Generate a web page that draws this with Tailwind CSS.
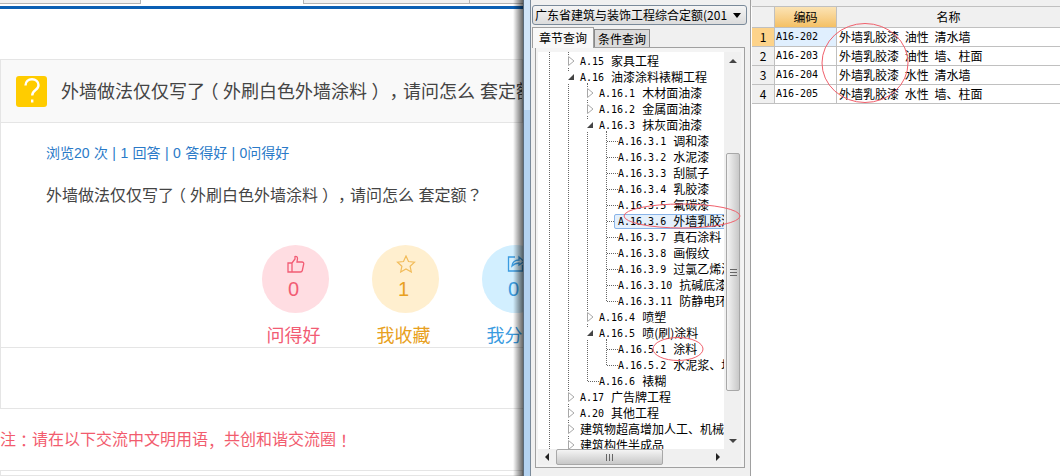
<!DOCTYPE html>
<html><head><meta charset="utf-8"><script src="https://cdn.jsdelivr.net/npm/@tailwindcss/browser@4"></script></head>
<body class="m-0">
<div class="relative w-[1060px] h-[476px] overflow-hidden flex bg-white font-['Noto_Sans_CJK_SC','Liberation_Sans',sans-serif]">
  <!-- web page -->
  <div class="w-[523px] shrink-0 h-full flex flex-col font-['Liberation_Sans','Noto_Sans_CJK_SC',sans-serif]">
    <div class="h-[4px] flex shrink-0">
      <div class="w-[141px] border-r border-b border-[#b4b4b4] bg-[#f0f0f0]"></div>
      <div class="w-[162px]"></div>
      <div class="w-[167px] border-x border-b border-[#b4b4b4] bg-[#f0f0f0]"></div>
      <div class="flex-1 border-b border-[#b4b4b4] bg-[#f0f0f0]"></div>
    </div>
    <div class="h-[2px] shrink-0"></div>
    <div class="h-[3px] bg-[#0a5fb4] shrink-0"></div>
    <div class="h-[50px] shrink-0"></div>
    <div class="h-[64px] shrink-0 flex items-center gap-[14px] pl-[15px] border border-[#e5e5e5] bg-[#f9f9f9] overflow-hidden whitespace-nowrap">
      <div class="w-[31px] h-[31px] rounded-[3px] bg-[#ffcc00] shrink-0 flex items-center justify-center">
        <svg class="w-[16px] h-[26px]" viewBox="0 0 16 26" fill="none" stroke="#fff" stroke-width="2.400"><path d="M1.500 7.500C1.500 3.500 4.300 1.300 8 1.300s6.500 2.300 6.500 5.700c0 2.300-1.200 3.700-3 5-1.900 1.400-3.300 2.700-3.300 5.500"/><path d="M8.200 21.500v3"/></svg>
      </div>
      <div class="text-[18px] text-[#444]">外墙做法仅仅写了<span class="inline-block w-[1em] text-center [font-feature-settings:'halt']">（</span>外刷白色外墙涂料<span class="inline-block w-[1em] text-center [font-feature-settings:'halt']">）</span><span class="inline-block w-[1em] text-center [font-feature-settings:'halt']">，</span>请问怎么 套定额<span class="font-['Noto_Sans_CJK_KR']">？</span></div>
    </div>
    <div class="h-[225px] shrink-0 border-l border-b border-[#e5e5e5] flex flex-col overflow-hidden">
      <div class="pl-[45px] pt-[19px] text-[14px] leading-[22px] text-[#2a7ac8] whitespace-nowrap [word-spacing:0.5px]">浏览20 次 | 1 回答 | 0 答得好 | 0问得好</div>
      <div class="pl-[45px] pt-[18px] text-[16px] leading-[24px] text-[#444] whitespace-nowrap">外墙做法仅仅写了<span class="inline-block w-[1em] text-center [font-feature-settings:'halt']">（</span>外刷白色外墙涂料<span class="inline-block w-[1em] text-center [font-feature-settings:'halt']">）</span><span class="inline-block w-[1em] text-center [font-feature-settings:'halt']">，</span>请问怎么 套定额<span class="font-['Noto_Sans_CJK_KR']">？</span></div>
      <div class="flex gap-[43px] pl-[261px] pt-[37px] w-[600px]">
        <div class="w-[67px] shrink-0 flex flex-col items-center">
          <div class="w-[67px] h-[68px] rounded-full bg-[#ffdde2] text-[#f25c74] flex flex-col items-center pt-[10px]">
            <svg class="w-[18px] h-[18px]" viewBox="0 0 18 18" fill="none" stroke="#f25c74" stroke-width="1.300"><path d="M1 8h4v9H1zM5 8l3-4V1.500c1.500-.5 2.500.5 2.500 2L10 7h5c1.300 0 2 1 1.700 2l-1.400 6.500c-.2 1-1 1.500-2 1.500H5"/></svg>
            <div class="text-[20px] leading-[26px] mt-[3px] mr-[4px]">0</div>
          </div>
          <div class="text-[18px] leading-[24px] mt-[11px] mr-[4px] text-[#f25c74] whitespace-nowrap">问得好</div>
        </div>
        <div class="w-[67px] shrink-0 flex flex-col items-center">
          <div class="w-[67px] h-[68px] rounded-full bg-[#ffefcf] text-[#e8a020] flex flex-col items-center pt-[10px]">
            <svg class="w-[20px] h-[18px]" viewBox="0 0 20 18" fill="none" stroke="#f2bc5a" stroke-width="1.200"><path d="M10 1l2.500 5.500 6 .7-4.400 4 1.200 5.800L10 14l-5.300 3 1.200-5.800-4.400-4 6-.7z"/></svg>
            <div class="text-[20px] leading-[26px] mt-[3px] mr-[4px]">1</div>
          </div>
          <div class="text-[18px] leading-[24px] mt-[11px] mr-[4px] text-[#e8a020] whitespace-nowrap">我收藏</div>
        </div>
        <div class="w-[67px] shrink-0 flex flex-col items-center">
          <div class="w-[67px] h-[68px] rounded-full bg-[#d2efff] text-[#3a9be0] flex flex-col items-center pt-[10px]">
            <svg class="w-[18px] h-[18px]" viewBox="0 0 18 18" fill="none" stroke="#3a9be0" stroke-width="1.300"><path d="M8 2H1.500v14h14v-6M5 11c.5-4 3-6 7-6V2l5 4.500L12 10V8c-3 0-5 1-7 3z"/></svg>
            <div class="text-[20px] leading-[26px] mt-[3px] mr-[4px]">0</div>
          </div>
          <div class="text-[18px] leading-[24px] mt-[11px] mr-[4px] text-[#3a9be0] whitespace-nowrap">我分享</div>
        </div>
      </div>
    </div>
    <div class="h-[61px] shrink-0 border-l border-b border-[#e5e5e5]"></div>
    <div class="h-[61px] shrink-0 flex items-center text-[16px] text-[#f25c6e] whitespace-nowrap">注<span class="font-['Noto_Sans_CJK_KR']">：</span>请在以下交流中文明用语<span class="font-['Noto_Sans_CJK_KR']">，</span>共创和谐交流圈<span class="font-['Noto_Sans_CJK_KR']">！</span></div>
    <div class="flex-1 border border-[#e5e5e5] p-[2px] flex">
      <div class="w-[213px] border-r border-[#e5e5e5] flex justify-end"><div class="w-[68px] bg-[#fde8d0] [clip-path:polygon(0_0,100%_0,100%_100%,8%_100%)]"></div></div>
    </div>
  </div>
  <!-- shadow + blue window strip -->
  <div class="w-[8px] shrink-0 h-full bg-[#b4d2f0] relative">
    <div class="absolute right-full top-0 bottom-0 w-[10px] bg-gradient-to-r from-transparent to-black/60"></div>
    <div class="absolute left-0 top-0 h-[110px] right-0 bg-[#d0e4f8]"></div>
    <div class="absolute left-0 top-0 bottom-0 w-px bg-[#5a6a7a]"></div>
    <div class="absolute right-0 top-0 bottom-0 w-px bg-[#7a8a9a]"></div>
  </div>
  <!-- tree pane -->
  <div class="w-[220px] shrink-0 h-full bg-[#f0f0f0] flex flex-col pt-[5px] pl-[1px] border-r border-[#a0a0a0]">
    <div class="h-[20px] w-[215px] shrink-0 flex items-center justify-between pl-[2px] pr-[5px] rounded-[3px] border border-[#7a8a9a] bg-gradient-to-b from-[#f5f5f5] to-[#dcdcdc] text-[12px] text-black whitespace-nowrap overflow-hidden">
      <span>广东省建筑与装饰工程综合定额(201</span><span class="w-0 h-0 border-x-[4px] border-x-transparent border-t-[5px] border-t-black shrink-0"></span>
    </div>
    <div class="flex items-end h-[20px] shrink-0 mt-[2px] text-[12px] text-black">
      <div class="h-[21px] w-[62px] bg-[#f8f8f8] border border-b-0 border-[#a0a0a0] text-center leading-[19px] relative z-10 -mb-px">章节查询</div>
      <div class="h-[18px] w-[56px] bg-[#dcdcdc] border border-b-0 border-[#8a8a8a] text-center leading-[17px]">条件查询</div>
    </div>
    <div class="w-[210px] ml-[3px] h-[421px] border border-[#a0a0a0] bg-[#f4f4f4] pt-[4px] pl-[2px] pb-[2px]">
      <div class="h-full w-[203px] flex flex-col">
        <div class="flex h-[397px]">
          <div class="relative w-[186px] bg-white overflow-hidden text-[12px] text-black">
            <div class="absolute left-[11px] top-0 bottom-0 border-l border-dotted border-[#666]"></div>
            <div class="absolute left-[30px] top-0 bottom-[4px] border-l border-dotted border-[#666]"></div>
            <div class="absolute left-[49px] top-[31px] h-[298px] border-l border-dotted border-[#666]"></div>
            <div class="absolute left-[68px] top-[79px] h-[170px] border-l border-dotted border-[#666]"></div>
            <div class="absolute left-[68px] top-[287px] h-[26px] border-l border-dotted border-[#666]"></div>
            <div class="flex flex-col pt-[1px] relative">
              <div class="h-[16px] flex items-center pl-[29px] whitespace-nowrap"><svg class="w-[9px] h-[12px] bg-white shrink-0" viewBox="0 0 9 12"><path d="M1.500 1.500v9L7 6z" fill="#fff" stroke="#a8a8a8"/></svg><span class="w-[4px] shrink-0"></span><span class="font-['DejaVu_Sans_Mono'] text-[10px]">A.15</span><span class="ml-[7px]">家具工程</span></div>
              <div class="h-[16px] flex items-center pl-[29px] whitespace-nowrap"><svg class="w-[9px] h-[12px] bg-white shrink-0" viewBox="0 0 9 12"><path d="M1 9h6V3z" fill="#444"/></svg><span class="w-[4px] shrink-0"></span><span class="font-['DejaVu_Sans_Mono'] text-[10px]">A.16</span><span class="ml-[7px]">油漆涂料裱糊工程</span></div>
              <div class="h-[16px] flex items-center pl-[48px] whitespace-nowrap"><svg class="w-[9px] h-[12px] bg-white shrink-0" viewBox="0 0 9 12"><path d="M1.500 1.500v9L7 6z" fill="#fff" stroke="#a8a8a8"/></svg><span class="w-[4px] shrink-0"></span><span class="font-['DejaVu_Sans_Mono'] text-[10px]">A.16.1</span><span class="ml-[7px]">木材面油漆</span></div>
              <div class="h-[16px] flex items-center pl-[48px] whitespace-nowrap"><svg class="w-[9px] h-[12px] bg-white shrink-0" viewBox="0 0 9 12"><path d="M1.500 1.500v9L7 6z" fill="#fff" stroke="#a8a8a8"/></svg><span class="w-[4px] shrink-0"></span><span class="font-['DejaVu_Sans_Mono'] text-[10px]">A.16.2</span><span class="ml-[7px]">金属面油漆</span></div>
              <div class="h-[16px] flex items-center pl-[48px] whitespace-nowrap"><svg class="w-[9px] h-[12px] bg-white shrink-0" viewBox="0 0 9 12"><path d="M1 9h6V3z" fill="#444"/></svg><span class="w-[4px] shrink-0"></span><span class="font-['DejaVu_Sans_Mono'] text-[10px]">A.16.3</span><span class="ml-[7px]">抹灰面油漆</span></div>
              <div class="h-[16px] flex items-center pl-[69px] whitespace-nowrap"><span class="w-[11px] border-t border-dotted border-[#666] shrink-0"></span><span class="font-['DejaVu_Sans_Mono'] text-[10px]">A.16.3.1</span><span class="ml-[7px]">调和漆</span></div>
              <div class="h-[16px] flex items-center pl-[69px] whitespace-nowrap"><span class="w-[11px] border-t border-dotted border-[#666] shrink-0"></span><span class="font-['DejaVu_Sans_Mono'] text-[10px]">A.16.3.2</span><span class="ml-[7px]">水泥漆</span></div>
              <div class="h-[16px] flex items-center pl-[69px] whitespace-nowrap"><span class="w-[11px] border-t border-dotted border-[#666] shrink-0"></span><span class="font-['DejaVu_Sans_Mono'] text-[10px]">A.16.3.3</span><span class="ml-[7px]">刮腻子</span></div>
              <div class="h-[16px] flex items-center pl-[69px] whitespace-nowrap"><span class="w-[11px] border-t border-dotted border-[#666] shrink-0"></span><span class="font-['DejaVu_Sans_Mono'] text-[10px]">A.16.3.4</span><span class="ml-[7px]">乳胶漆</span></div>
              <div class="h-[16px] flex items-center pl-[69px] whitespace-nowrap"><span class="w-[11px] border-t border-dotted border-[#666] shrink-0"></span><span class="font-['DejaVu_Sans_Mono'] text-[10px]">A.16.3.5</span><span class="ml-[7px]">氟碳漆</span></div>
              <div class="h-[16px] flex items-center pl-[69px] whitespace-nowrap"><span class="w-[7px] border-t border-dotted border-[#666] shrink-0"></span><span class="h-[15px] flex items-center pl-[3px] w-[130px] border border-[#8ab4e8] rounded-[2px] bg-[#e4f0fc] shrink-0"><span class="font-['DejaVu_Sans_Mono'] text-[10px]">A.16.3.6</span><span class="ml-[7px]">外墙乳胶漆</span></span></div>
              <div class="h-[16px] flex items-center pl-[69px] whitespace-nowrap"><span class="w-[11px] border-t border-dotted border-[#666] shrink-0"></span><span class="font-['DejaVu_Sans_Mono'] text-[10px]">A.16.3.7</span><span class="ml-[7px]">真石涂料</span></div>
              <div class="h-[16px] flex items-center pl-[69px] whitespace-nowrap"><span class="w-[11px] border-t border-dotted border-[#666] shrink-0"></span><span class="font-['DejaVu_Sans_Mono'] text-[10px]">A.16.3.8</span><span class="ml-[7px]">画假纹</span></div>
              <div class="h-[16px] flex items-center pl-[69px] whitespace-nowrap"><span class="w-[11px] border-t border-dotted border-[#666] shrink-0"></span><span class="font-['DejaVu_Sans_Mono'] text-[10px]">A.16.3.9</span><span class="ml-[7px]">过氯乙烯漆</span></div>
              <div class="h-[16px] flex items-center pl-[69px] whitespace-nowrap"><span class="w-[11px] border-t border-dotted border-[#666] shrink-0"></span><span class="font-['DejaVu_Sans_Mono'] text-[10px]">A.16.3.10</span><span class="ml-[7px]">抗碱底漆</span></div>
              <div class="h-[16px] flex items-center pl-[69px] whitespace-nowrap"><span class="w-[11px] border-t border-dotted border-[#666] shrink-0"></span><span class="font-['DejaVu_Sans_Mono'] text-[10px]">A.16.3.11</span><span class="ml-[7px]">防静电环氧</span></div>
              <div class="h-[16px] flex items-center pl-[48px] whitespace-nowrap"><svg class="w-[9px] h-[12px] bg-white shrink-0" viewBox="0 0 9 12"><path d="M1.500 1.500v9L7 6z" fill="#fff" stroke="#a8a8a8"/></svg><span class="w-[4px] shrink-0"></span><span class="font-['DejaVu_Sans_Mono'] text-[10px]">A.16.4</span><span class="ml-[7px]">喷塑</span></div>
              <div class="h-[16px] flex items-center pl-[48px] whitespace-nowrap"><svg class="w-[9px] h-[12px] bg-white shrink-0" viewBox="0 0 9 12"><path d="M1 9h6V3z" fill="#444"/></svg><span class="w-[4px] shrink-0"></span><span class="font-['DejaVu_Sans_Mono'] text-[10px]">A.16.5</span><span class="ml-[7px]">喷(刷)涂料</span></div>
              <div class="h-[16px] flex items-center pl-[69px] whitespace-nowrap"><span class="w-[11px] border-t border-dotted border-[#666] shrink-0"></span><span class="font-['DejaVu_Sans_Mono'] text-[10px]">A.16.5.1</span><span class="ml-[7px]">涂料</span></div>
              <div class="h-[16px] flex items-center pl-[69px] whitespace-nowrap"><span class="w-[11px] border-t border-dotted border-[#666] shrink-0"></span><span class="font-['DejaVu_Sans_Mono'] text-[10px]">A.16.5.2</span><span class="ml-[7px]">水泥浆、地板漆</span></div>
              <div class="h-[16px] flex items-center pl-[50px] whitespace-nowrap"><span class="w-[11px] border-t border-dotted border-[#666] shrink-0"></span><span class="font-['DejaVu_Sans_Mono'] text-[10px]">A.16.6</span><span class="ml-[7px]">裱糊</span></div>
              <div class="h-[16px] flex items-center pl-[29px] whitespace-nowrap"><svg class="w-[9px] h-[12px] bg-white shrink-0" viewBox="0 0 9 12"><path d="M1.500 1.500v9L7 6z" fill="#fff" stroke="#a8a8a8"/></svg><span class="w-[4px] shrink-0"></span><span class="font-['DejaVu_Sans_Mono'] text-[10px]">A.17</span><span class="ml-[7px]">广告牌工程</span></div>
              <div class="h-[16px] flex items-center pl-[29px] whitespace-nowrap"><svg class="w-[9px] h-[12px] bg-white shrink-0" viewBox="0 0 9 12"><path d="M1.500 1.500v9L7 6z" fill="#fff" stroke="#a8a8a8"/></svg><span class="w-[4px] shrink-0"></span><span class="font-['DejaVu_Sans_Mono'] text-[10px]">A.20</span><span class="ml-[7px]">其他工程</span></div>
              <div class="h-[16px] flex items-center pl-[29px] whitespace-nowrap"><svg class="w-[9px] h-[12px] bg-white shrink-0" viewBox="0 0 9 12"><path d="M1.500 1.500v9L7 6z" fill="#fff" stroke="#a8a8a8"/></svg><span class="w-[4px] shrink-0"></span><span>建筑物超高增加人工、机械</span></div>
              <div class="h-[16px] flex items-center pl-[29px] whitespace-nowrap"><svg class="w-[9px] h-[12px] bg-white shrink-0" viewBox="0 0 9 12"><path d="M1.500 1.500v9L7 6z" fill="#fff" stroke="#a8a8a8"/></svg><span class="w-[4px] shrink-0"></span><span>建筑构件半成品</span></div>
            </div>
          </div>
          <div class="w-[17px] flex flex-col bg-[#f0f0f0]">
            <div class="h-[17px] flex items-center justify-center"><span class="w-0 h-0 border-x-[4px] border-x-transparent border-b-[4px] border-b-[#444]"></span></div>
            <div class="h-[84px]"></div>
            <div class="h-[238px] w-[14px] ml-[2px] border border-[#a8a8a8] rounded-[2px] bg-gradient-to-r from-[#f4f4f4] to-[#c8c8c8] flex items-center justify-center"><div class="w-[7px] h-[7px] border-y border-[#666] flex items-center"><div class="w-full border-t border-[#666]"></div></div></div>
            <div class="flex-1"></div>
            <div class="h-[17px] flex items-center justify-center"><span class="w-0 h-0 border-x-[4px] border-x-transparent border-t-[4px] border-t-[#444]"></span></div>
          </div>
        </div>
        <div class="h-[16px] flex bg-[#f0f0f0] items-center">
          <div class="w-[18px] flex justify-center"><span class="w-0 h-0 border-y-[4px] border-y-transparent border-r-[4px] border-r-[#222]"></span></div>
          <div class="w-[107px] h-[16px] border border-[#a8a8a8] rounded-[2px] bg-gradient-to-b from-[#f4f4f4] to-[#c8c8c8] flex items-center justify-center"><div class="h-[7px] w-[7px] border-x border-[#666] flex justify-center"><div class="h-full border-l border-[#666]"></div></div></div>
          <div class="flex-1"></div>
          <div class="w-[16px] flex justify-center"><span class="w-0 h-0 border-y-[4px] border-y-transparent border-l-[4px] border-l-[#222]"></span></div>
          <div class="w-[15px]"></div>
        </div>
      </div>
    </div>
  </div>
  <!-- grid -->
  <div class="flex-1 flex flex-col bg-white">
    <div class="h-[6px] bg-[#f0f0f0] shrink-0"></div>
    <div class="text-[12px] text-black grid grid-cols-[23px_62px_223px] grid-rows-[22px_19px_19px_19px_19px] leading-[18px] ml-[1px] whitespace-nowrap [word-spacing:3px]">
      <div class="bg-[#f0f0f0] border-y border-r border-[#c0c0c0]"></div>
      <div class="bg-gradient-to-b from-[#fbe3b4] to-[#f4c063] border-y border-r border-[#c0c0c0] text-center leading-[19px]">编码</div>
      <div class="bg-[#f0f0f0] border-y border-[#c0c0c0] text-center leading-[19px]">名称</div>
      <div class="bg-[#fdd38a] border-b border-r border-[#c0c0c0] text-center">1</div>
      <div class="bg-[#e0effe] border-b border-r border-[#c0c0c0] pl-[1px] font-['DejaVu_Sans_Mono'] text-[10px]">A16-202</div>
      <div class="border-b border-[#c0c0c0] pl-[2px]">外墙乳胶漆 油性 清水墙</div>
      <div class="bg-[#f0f0f0] border-b border-r border-[#c0c0c0] text-center">2</div>
      <div class="border-b border-r border-[#c0c0c0] pl-[1px] font-['DejaVu_Sans_Mono'] text-[10px]">A16-203</div>
      <div class="border-b border-[#c0c0c0] pl-[2px]">外墙乳胶漆 油性 墙、柱面</div>
      <div class="bg-[#f0f0f0] border-b border-r border-[#c0c0c0] text-center">3</div>
      <div class="border-b border-r border-[#c0c0c0] pl-[1px] font-['DejaVu_Sans_Mono'] text-[10px]">A16-204</div>
      <div class="border-b border-[#c0c0c0] pl-[2px]">外墙乳胶漆 水性 清水墙</div>
      <div class="bg-[#f0f0f0] border-b border-r border-[#c0c0c0] text-center">4</div>
      <div class="border-b border-r border-[#c0c0c0] pl-[1px] font-['DejaVu_Sans_Mono'] text-[10px]">A16-205</div>
      <div class="border-b border-[#c0c0c0] pl-[2px]">外墙乳胶漆 水性 墙、柱面</div>
    </div>
  </div>
  <!-- hand-drawn annotation ellipses -->
  <svg class="absolute inset-0 pointer-events-none" width="1060" height="476" fill="none" stroke="#f0606c" stroke-width="1">
    <ellipse cx="682" cy="216" rx="58" ry="12"/>
    <ellipse cx="678" cy="349" rx="25" ry="11.500"/>
    <ellipse cx="865" cy="63" rx="43" ry="39.500"/>
  </svg>
</div>
</body></html>
